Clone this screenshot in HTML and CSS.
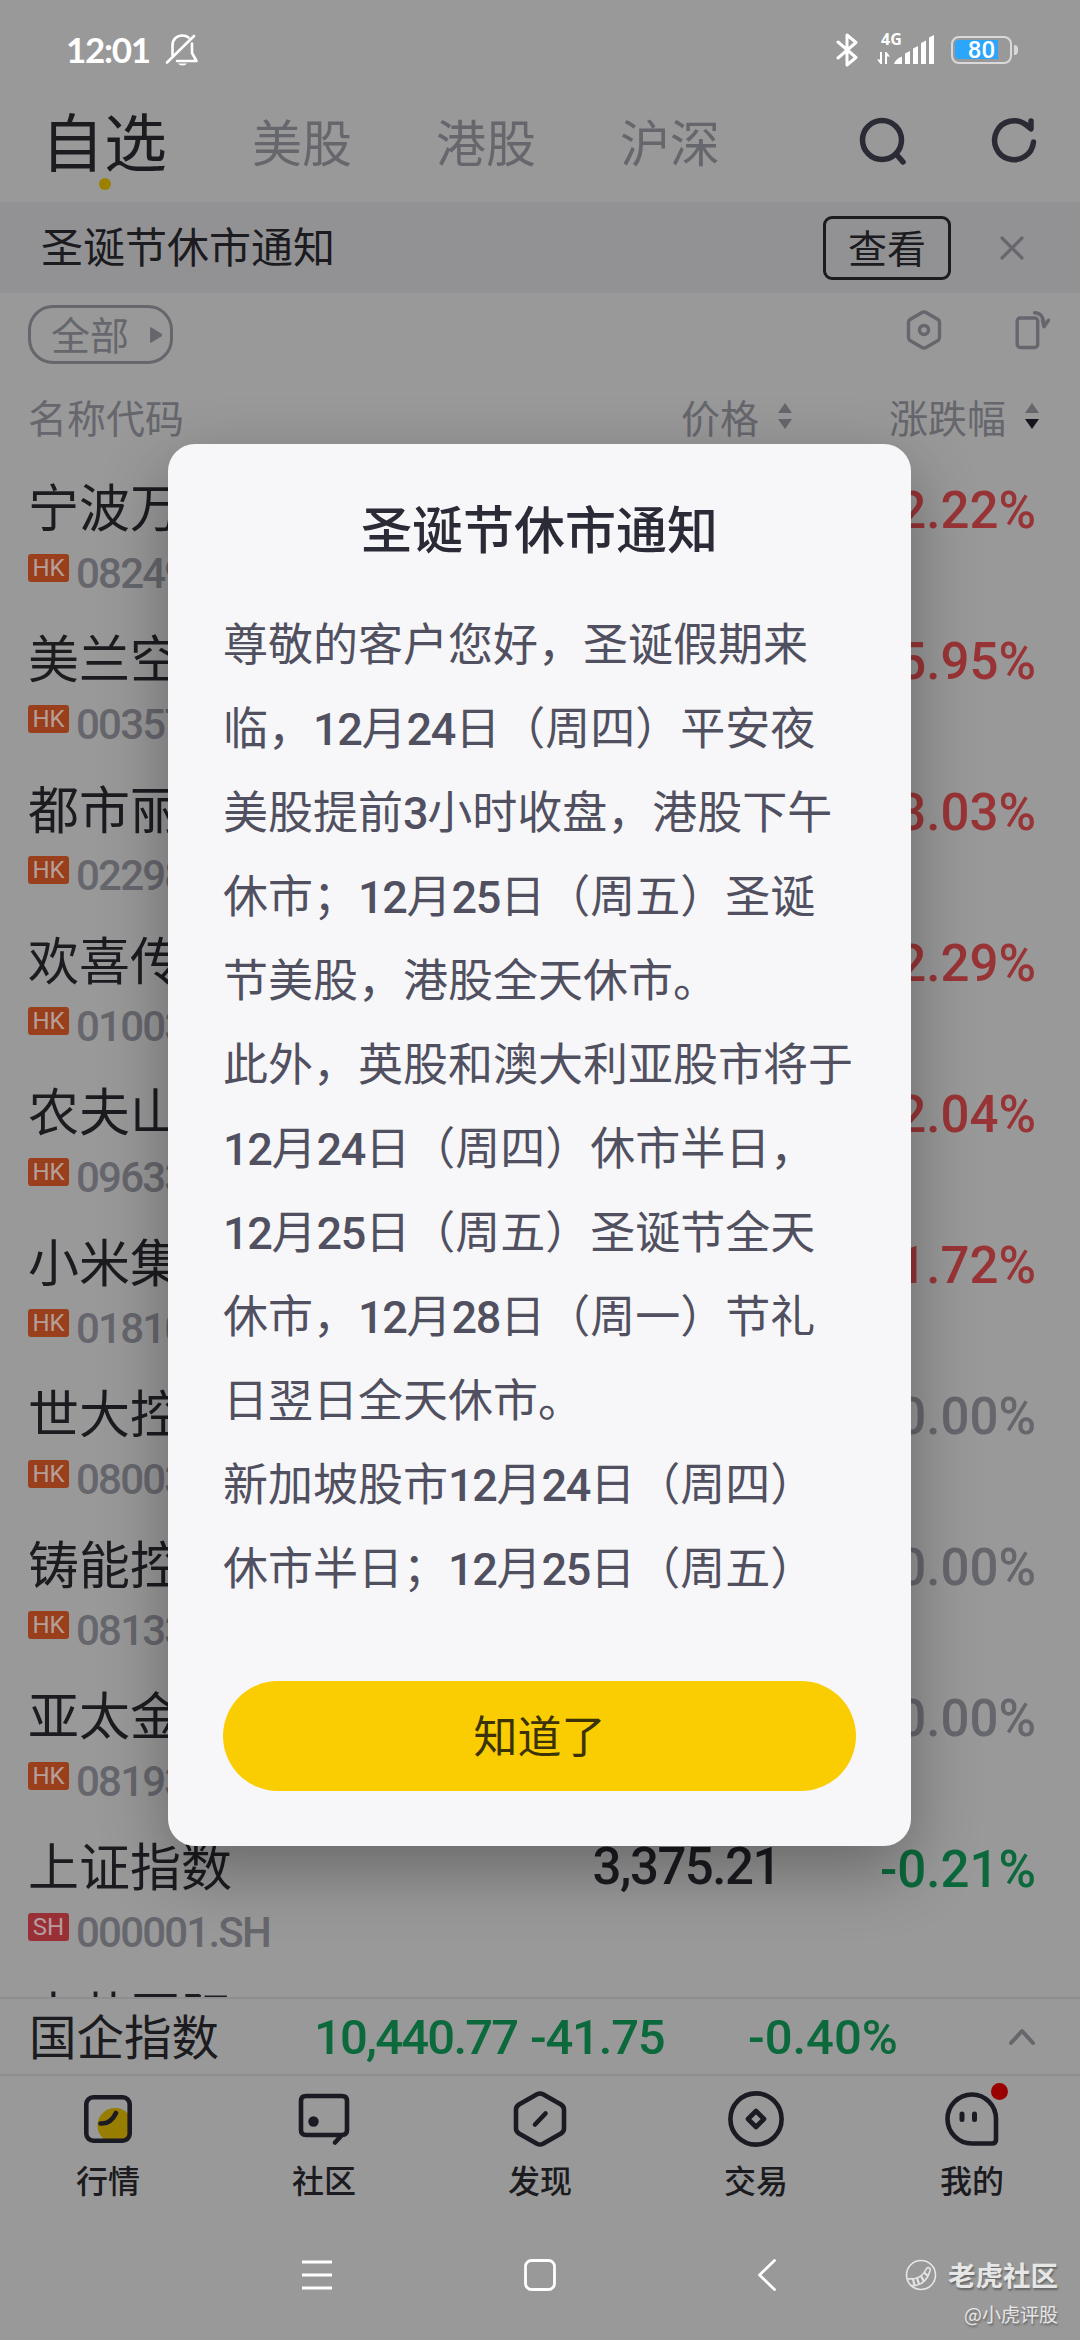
FILE: index.html
```html
<!DOCTYPE html>
<html lang="zh-CN">
<head>
<meta charset="utf-8">
<title>自选</title>
<link rel="stylesheet" href="styles.css">
</head>
<body>
<div class="screen">
  <header class="status">
    <span class="clock">12:01</span>
    <svg class="bell" width="34" height="34" viewBox="0 0 34 34" fill="none" stroke="#fff" stroke-width="2.6" stroke-linecap="round" stroke-linejoin="round"><path d="M7.500 22V12.500C7.500 6 12 2.500 17.500 2.500c2.500 0 4.500.7 6 2M27 10.500V20l4.500 8H12M2 29.500 29 3"/><path d="M13 30.500h9a5 3.500 0 0 1-9 0z" fill="#fff" stroke="none"/></svg>
    <div class="status-right">
      <svg width="22" height="36" viewBox="0 0 22 36" fill="none" stroke="#fff" stroke-width="3" stroke-linejoin="round" stroke-linecap="round"><path d="M2 10 20 25.500 11 33V3l9 7.500L2 26"/></svg>
      <div class="cell">
        <span class="net">4G</span>
        <svg width="58" height="34" viewBox="0 0 58 34" fill="#fff"><path d="M3 19h2v12H3.500L0 26.500h3zM8 19h1.500l3.500 4.500h-3V31H8zM17 31c1-3.500 4-6 8-7.500V31zM28 20.500l5-2.500v13h-5zM36 15.500l5-2.500v18h-5zM44 10l5-2.500V31h-5zM52 4.500 57 2v29h-5z"/></svg>
      </div>
      <div class="battery"><span class="battery-level"></span><span class="battery-text">80</span><span class="battery-cap"></span></div>
    </div>
  </header>

  <nav class="tabs">
    <span class="tab tab-on">自选</span>
    <span class="tab">美股</span>
    <span class="tab">港股</span>
    <span class="tab">沪深</span>
    <div class="tab-tools">
      <svg width="50" height="50" viewBox="0 0 50 50" fill="none" stroke="#2b2b36" stroke-width="5.500" stroke-linecap="round"><circle cx="23" cy="24" r="19.500"/><path d="m38 39 6 7"/></svg>
      <svg width="50" height="50" viewBox="0 0 50 50" fill="none" stroke="#2b2b36" stroke-width="5.500" stroke-linecap="round" stroke-linejoin="round"><path d="M43.500 26A19.500 19.500 0 1 1 36 8.800l5 4V5"/></svg>
    </div>
  </nav>

  <section class="notice">
    <span class="notice-text">圣诞节休市通知</span>
    <span class="notice-btn">查看</span>
    <svg width="26" height="26" viewBox="0 0 26 26" stroke="#66666d" stroke-width="3.200" stroke-linecap="round"><path d="m3 3 20 20M23 3 3 23"/></svg>
  </section>

  <section class="filter">
    <span class="pill"><span>全部</span><svg width="14" height="18" viewBox="0 0 14 18" fill="#66666d"><path d="M1 2.500Q1 .8 2.500 1.600l10 6.200q1.500 1.200 0 2.400l-10 6.200Q1 17.200 1 15.500z"/></svg></span>
    <svg class="gear" width="40" height="42" viewBox="0 0 40 42" fill="none" stroke="#66666d" stroke-width="3.400" stroke-linejoin="round"><path d="M18 3.500q2-1 4 0l12 7q1.500 1 1.500 3v15q0 2-1.500 3l-12 7q-2 1-4 0l-12-7q-1.500-1-1.500-3v-15q0-2 1.500-3z"/><circle cx="20" cy="21" r="4.500"/></svg>
    <svg class="rotate" width="38" height="42" viewBox="0 0 38 42" fill="none" stroke="#66666d" stroke-width="3.400" stroke-linejoin="round" stroke-linecap="round"><rect x="4.200" y="9" width="20.500" height="29.500" rx="3"/><path d="M21.500 3.700c6 0 9.500 4 9.500 14l4.500-6.500M31 17.500l-1.500-6"/></svg>
  </section>

  <section class="cols">
    <span class="col-name">名称代码</span>
    <span class="col-price">价格<svg width="14" height="28" viewBox="0 0 14 28"><path fill="#66666d" d="M0 11 7 1l7 10zM0 17h14L7 27z"/></svg></span>
    <span class="col-chg">涨跌幅<svg width="14" height="28" viewBox="0 0 14 28"><path fill="#66666d" d="M0 11 7 1l7 10z"/><path fill="#14141d" d="M0 17h14L7 27z"/></svg></span>
  </section>

  <main class="list">
    <div class="row"><span class="name">宁波万豪</span><div class="code"><i class="mk">HK</i><span>08249</span></div><span class="chg up">+2.22%</span></div>
    <div class="row"><span class="name">美兰空港</span><div class="code"><i class="mk">HK</i><span>00357</span></div><span class="chg up">+5.95%</span></div>
    <div class="row"><span class="name">都市丽人</span><div class="code"><i class="mk">HK</i><span>02298</span></div><span class="chg up">+3.03%</span></div>
    <div class="row"><span class="name">欢喜传媒</span><div class="code"><i class="mk">HK</i><span>01003</span></div><span class="chg up">+2.29%</span></div>
    <div class="row"><span class="name">农夫山泉</span><div class="code"><i class="mk">HK</i><span>09633</span></div><span class="chg up">+2.04%</span></div>
    <div class="row"><span class="name">小米集团</span><div class="code"><i class="mk">HK</i><span>01810</span></div><span class="chg up">+1.72%</span></div>
    <div class="row"><span class="name">世大控股</span><div class="code"><i class="mk">HK</i><span>08003</span></div><span class="chg flat">0.00%</span></div>
    <div class="row"><span class="name">铸能控股</span><div class="code"><i class="mk">HK</i><span>08133</span></div><span class="chg flat">0.00%</span></div>
    <div class="row"><span class="name">亚太金融</span><div class="code"><i class="mk">HK</i><span>08193</span></div><span class="chg flat">0.00%</span></div>
    <div class="row"><span class="name">上证指数</span><div class="code"><i class="mk sh">SH</i><span>000001.SH</span></div><span class="price">3,375.21</span><span class="chg down">-0.21%</span></div>
    <div class="row row-last"><span class="name">中芯国际</span></div>
  </main>

  <section class="index">
    <span class="index-name">国企指数</span>
    <span class="index-num index-last">10,440.77</span>
    <span class="index-num index-diff">-41.75</span>
    <span class="index-num index-pct">-0.40%</span>
    <svg width="30" height="20" viewBox="0 0 30 20" fill="none" stroke="#66666d" stroke-width="4" stroke-linecap="round" stroke-linejoin="round"><path d="M4 16 15 4l11 12"/></svg>
  </section>

  <nav class="bottom">
    <div class="item"><svg width="60" height="60" viewBox="0 0 60 60" fill="none" stroke="#1b1b24" stroke-width="4.600" stroke-linecap="round"><clipPath id="frame"><rect x="8" y="8" width="42" height="43"/></clipPath><circle cx="37" cy="36.500" r="17.500" fill="#977d00" stroke="none" clip-path="url(#frame)"/><rect x="8.300" y="8.300" width="43.400" height="43.400" rx="7"/><path d="M22.500 34.500c7 .5 12-3 15.500-10.500"/></svg><span>行情</span></div>
    <div class="item"><svg width="60" height="60" viewBox="0 0 60 60" fill="none" stroke="#1b1b24" stroke-width="4.600" stroke-linecap="round" stroke-linejoin="round"><path d="M41 53.500 48 46q5 0 5-5V12q0-5-5-5H12q-5 0-5 5v29q0 5 5 5h36"/><circle cx="19.500" cy="32.500" r="5.200" fill="#1b1b24" stroke="none"/></svg><span>社区</span></div>
    <div class="item"><svg width="60" height="60" viewBox="0 0 60 60" fill="none" stroke="#1b1b24" stroke-width="4.600" stroke-linecap="round" stroke-linejoin="round"><path d="M27 5.300q3-1.600 6 0l18 10.200q3 2 3 5v19q0 3-3 5L33 54.700q-3 1.600-6 0L9 44.500q-3-2-3-5v-19q0-3 3-5z"/><path d="M25 35.500 35.500 24.500"/></svg><span>发现</span></div>
    <div class="item"><svg width="60" height="60" viewBox="0 0 60 60" fill="none" stroke="#1b1b24" stroke-width="4.600" stroke-linejoin="round"><circle cx="30" cy="30" r="25.600"/><path d="m30 22 8 8-8 8-8-8z"/></svg><span>交易</span></div>
    <div class="item"><svg width="60" height="60" viewBox="0 0 60 60" fill="none" stroke="#1b1b24" stroke-width="4.600" stroke-linecap="round"><path d="M30 5.500a24.200 24.200 0 0 0 0 49h20q4 0 4-4V30A24 24.500 0 0 0 30 5.500z"/><path d="M20 25v5.500M32.500 25v5.500" stroke-width="5"/></svg><span>我的</span><b class="badge"></b></div>
  </nav>

  <footer class="sysnav">
    <svg class="sys-menu" width="30" height="32" viewBox="0 0 30 32" stroke="#fff" stroke-width="2.800"><path d="M0 3h30M0 16h30M0 29h30"/></svg>
    <svg class="sys-home" width="34" height="34" viewBox="0 0 34 34" fill="none" stroke="#fff" stroke-width="2.800"><rect x="2.500" y="2.500" width="29" height="29" rx="6"/></svg>
    <svg class="sys-back" width="20" height="34" viewBox="0 0 20 34" fill="none" stroke="#fff" stroke-width="2.800" stroke-linecap="round" stroke-linejoin="round"><path d="M17.500 2.500 2.500 17l15 14.500"/></svg>
    <div class="mark">
      <div class="mark-top"><svg width="32" height="32" viewBox="0 0 32 32" fill="none" stroke="#e6e6e6" stroke-width="1.600"><circle cx="16" cy="16" r="14.500"/><path d="M2 20q4 0 8-.5c6-1 9-5 11-9 1.500-3 5-2 4 1.500-2 7-7 13-14 14.500-3 .3-5 .2-6-.5"/><path d="M8 20l1.500 6M12 19l2 6M16 17l3 5.500M19 13.500l4 3.500" stroke-width="2.200"/></svg><span>老虎社区</span></div>
      <span class="mark-user">@小虎评股</span>
    </div>
  </footer>

  <div class="dialog">
    <h1>圣诞节休市通知</h1>
    <div class="msg">
      <p>尊敬的客户您好，圣诞假期来</p>
      <p>临，<b>12</b>月<b>24</b>日（周四）平安夜</p>
      <p>美股提前<b>3</b>小时收盘，港股下午</p>
      <p>休市；<b>12</b>月<b>25</b>日（周五）圣诞</p>
      <p>节美股，港股全天休市。</p>
      <p>此外，英股和澳大利亚股市将于</p>
      <p><b>12</b>月<b>24</b>日（周四）休市半日，</p>
      <p><b>12</b>月<b>25</b>日（周五）圣诞节全天</p>
      <p>休市，<b>12</b>月<b>28</b>日（周一）节礼</p>
      <p>日翌日全天休市。</p>
      <p>新加坡股市<b>12</b>月<b>24</b>日（周四）</p>
      <p>休市半日；<b>12</b>月<b>25</b>日（周五）</p>
    </div>
    <button class="ok">知道了</button>
  </div>
</div>
</body>
</html>
```
FILE: styles.css
```css
* { box-sizing: border-box; margin: 0; padding: 0; }
body { background: #999; font-family: "Noto Sans CJK SC", sans-serif; }
svg { display: block; flex: none; }
.screen { position: relative; width: 1080px; height: 2340px; overflow: hidden; display: flex; flex-direction: column; color: #1b1b20; white-space: nowrap; }
.screen > * { flex: none; }

.status { height: 98px; display: flex; align-items: center; padding: 2px 62px 0 66px; }
.clock { font: 700 35px/38px Lato, sans-serif; color: #fff; width: 83px; letter-spacing: -1.3px; margin-top: -2px; }
.bell { margin-left: 16px; }
.status-right { margin-left: auto; display: flex; align-items: center; }
.cell { position: relative; width: 60px; height: 34px; margin: 0 14px 0 19px; }
.net { position: absolute; left: 4px; top: -2px; font: 700 16px/16px "Open Sans", sans-serif; color: #fff; }
.battery { position: relative; width: 61px; height: 28px; border: 2.5px solid #d9d9d9; border-radius: 8px; margin-right: 6px; }
.battery-level { position: absolute; left: 2px; top: 2px; width: 43px; height: 19px; border-radius: 4px 0 0 4px; background: #2ba6fb; }
.battery-text { position: absolute; inset: 0; text-align: center; font: 500 24px/24px Roboto, sans-serif; color: #fff; }
.battery-cap { position: absolute; right: -8px; top: 7px; width: 4px; height: 10px; border-radius: 0 5px 5px 0; background: #d9d9d9; }

.tabs { height: 104px; display: flex; align-items: center; padding: 0 40px 18px 41px; }
.tab { font-size: 50px; line-height: 60px; color: #66666d; margin: -2px 84px 0 0; }
.tab-on { font-size: 63px; color: #1b1b20; margin-top: -5px; margin-right: 85px; position: relative; }
.tab-on::after { content: ""; position: absolute; left: 58px; top: 69px; width: 12px; height: 12px; border-radius: 50%; background: #9c8000; }
.tab-tools { margin-left: auto; display: flex; gap: 81px; }

.notice { height: 91px; background: #929295; display: flex; align-items: center; padding: 0 55px 0 41px; }
.notice-text { font-size: 42px; line-height: 60px; flex: 1; margin-top: -5px; }
.notice-btn { width: 128px; height: 64px; border: 3px solid #1b1b20; border-radius: 9px; font-size: 39px; line-height: 54px; text-align: center; margin-right: 48px; }

.filter { height: 85px; display: flex; align-items: flex-start; padding: 12px 29px 0 28px; }
.pill { width: 145px; height: 59px; border: 3px solid #66666d; border-radius: 25px; color: #66666d; font-size: 39px; line-height: 53px; display: flex; align-items: center; justify-content: space-between; padding: 0 7px 0 20px; }
.pill span { margin-top: -3px; }
.gear { margin-left: auto; margin-top: 4px; }
.rotate { margin: 4px 0 0 69px; }

.cols { height: 67px; display: flex; align-items: center; padding: 8px 41px 0 28px; font-size: 39px; line-height: 56px; color: #66666d; }
.cols span { display: flex; align-items: center; }
.col-price svg, .col-chg svg { margin-left: 19px; }
.col-price { margin-left: auto; margin-right: 97px; }

.list { height: 1554px; overflow: hidden; border-bottom: 2px solid #8e8e91; }
.row { height: 151px; display: grid; grid-template: 94px 57px / 360px 392px 1fr; padding: 12px 44px 0 28px; }
.row-last { margin-top: -2px; }
.name { font-size: 51px; line-height: 96px; }
.code { grid-row: 2; grid-column: 1; display: flex; align-items: flex-start; font: 500 42px/50px Roboto, sans-serif; color: #66666d; }
.code span { letter-spacing: -1.800px; margin-top: -2px; }
.mk { width: 41px; height: 28px; margin: 3px 7px 0 0; border-radius: 3px; background: #993f1c; color: #b5a099; font: 400 24px/29px Roboto, sans-serif; text-align: center; }
.sh { background: #993036; color: #b59da0; }
.price, .chg { grid-row: 1; font: 500 51px/94px Roboto, sans-serif; text-align: right; }
.price { grid-column: 2; margin-top: 4px; letter-spacing: -1.500px; }
.chg { grid-column: 3; margin-top: 7px; }
.up { color: #993436; }
.down { color: #0b693c; }
.flat { color: #66666d; }

.index { height: 77px; display: flex; align-items: center; padding: 0 43px 0 29px; border-bottom: 2px solid #8e8e91; }
.index-name { font-size: 47.500px; line-height: 70px; width: 285px; margin-top: -3px; }
.index-num { font: 500 49px/70px Roboto, sans-serif; color: #0b693c; margin-top: 2px; }
.index-last { width: 216px; letter-spacing: -1.800px; }
.index-diff { width: 218px; letter-spacing: -1.200px; }
.index svg { margin-left: auto; }

.bottom { height: 134px; display: grid; grid-template-columns: repeat(5, 1fr); }
.item { position: relative; display: flex; flex-direction: column; align-items: center; padding-top: 13px; color: #1b1b20; }
.item span { font-size: 32px; line-height: 40px; font-weight: 500; margin-top: 10px; }
.badge { position: absolute; left: 127px; top: 7px; width: 17px; height: 17px; border-radius: 50%; background: #9a0000; }

.sysnav { height: 130px; display: flex; align-items: flex-start; padding: 48px 22px 0 302px; }
.sys-menu { margin-top: 1px; }
.sys-home { margin-left: 191px; }
.sys-back { margin-left: 200px; }
.mark { margin-left: auto; display: flex; flex-direction: column; align-items: flex-end; color: #e6e6e6; text-shadow: 1px 2px 2px #666; }
.mark-top { display: flex; gap: 11px; align-items: center; font-size: 27.500px; line-height: 34px; font-weight: 700; }
.mark-top span { margin-top: -1px; }
.mark-user { font-size: 19px; line-height: 30px; margin-top: 8px; }

.dialog { position: absolute; left: 168px; top: 444px; width: 743px; height: 1402px; border-radius: 27px; background: #f7f7f9; box-shadow: 0 24px 68px rgba(0, 0, 0, .32); padding: 46px 55px 0; display: flex; flex-direction: column; }
.dialog h1 { font-size: 51px; line-height: 74px; font-weight: 500; color: #2b2b38; text-align: center; }
.msg { margin-top: 36px; height: 1081px; color: #505060; font-size: 45px; }
.msg p { height: 84px; line-height: 84px; }
.msg b { font-family: Roboto, sans-serif; font-weight: 500; line-height: 0; letter-spacing: -1.300px; }
.ok { width: 633px; height: 110px; border: 0; border-radius: 55px; background: #f9cd02; color: #3b3208; font: 400 44px/106px "Noto Sans CJK SC", sans-serif; padding-bottom: 4px; }
```
